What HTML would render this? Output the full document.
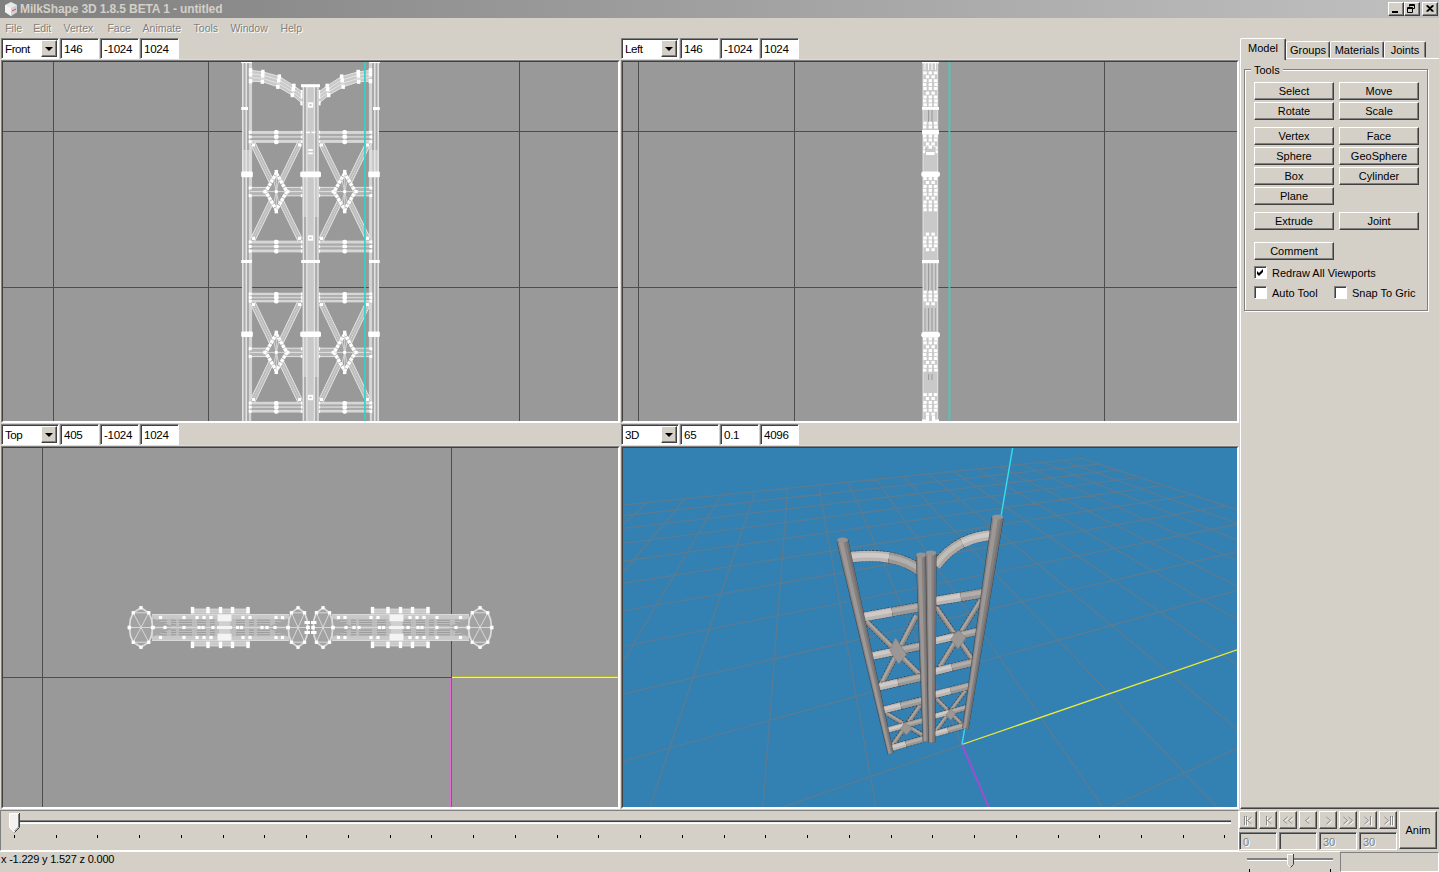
<!DOCTYPE html><html><head><meta charset="utf-8"><title>MilkShape 3D</title><style>
*{box-sizing:border-box;margin:0;padding:0}
html,body{width:1439px;height:872px;overflow:hidden;background:#d4d0c8;font-family:"Liberation Sans",sans-serif;font-size:11px;color:#000}
.abs{position:absolute}
#title{left:0;top:0;width:1439px;height:18px;background:linear-gradient(90deg,#808080 0%,#c0c0c0 100%)}
#title .t{left:20px;top:2px;font-weight:bold;font-size:12px;color:#d4d0c8;line-height:15px;white-space:nowrap;letter-spacing:-.12px}
.cb{top:2px;width:16px;height:14px;background:#d4d0c8;border:1px solid;border-color:#fff #404040 #404040 #fff;box-shadow:inset -1px -1px 0 #808080}
.menu span{position:absolute;top:21px;line-height:14px;font-size:10.5px;color:#808080;text-shadow:1px 1px 0 #fff;white-space:nowrap}
.sunk{border:1px solid;border-color:#808080 #fff #fff #808080;box-shadow:inset 1px 1px 0 #404040;background:#fff}
.edit{height:21px;font-size:11.6px;letter-spacing:-.3px;line-height:15px;padding:2.4px 0 0 3px;white-space:nowrap;overflow:hidden}
.combo{height:21px;width:58px}
.combo .tx{position:absolute;left:3px;top:2.6px;line-height:14px;font-size:11.6px;letter-spacing:-.45px}
.combo .dd{position:absolute;right:1px;top:1px;width:16px;height:17px;background:#d4d0c8;border:1px solid;border-color:#fff #404040 #404040 #fff;box-shadow:inset -1px -1px 0 #808080}
.combo .dd:after{content:"";position:absolute;left:3px;top:6px;border:4px solid transparent;border-top:4px solid #000;border-bottom:none}
.vp{border:1px solid;border-color:#808080 #fff #fff #808080;box-shadow:-1px -1px 0 #dedad2;overflow:hidden}
.vp:after{content:'';position:absolute;left:0;top:0;right:0;bottom:0;border:1px solid;border-color:#404040 #fff #fff #404040;pointer-events:none}
.vp svg{position:absolute;left:1px;top:1px;display:block;filter:blur(.3px)}
.btn{height:18px;width:80px;background:#d4d0c8;border:1px solid;border-color:#fff #404040 #404040 #fff;box-shadow:inset -1px -1px 0 #808080;text-align:center;font-size:11px;line-height:14px;padding-top:1px;white-space:nowrap}
.tab{background:#d4d0c8;border:1px solid;border-color:#fff #404040 transparent #fff;border-radius:2px 2px 0 0;box-shadow:inset -1px 0 0 #808080;text-align:center;font-size:11px;white-space:nowrap}
.chk{width:13px;height:13px;background:#fff;border:1px solid;border-color:#808080 #fff #fff #808080;box-shadow:inset 1px 1px 0 #404040}
.lbl{font-size:11px;line-height:13px;white-space:nowrap}
.abtn{width:18px;height:18px;background:#d4d0c8;border:1px solid;border-color:#fff #404040 #404040 #fff;box-shadow:inset -1px -1px 0 #808080}
.dis{color:#808080;text-shadow:1px 1px 0 #fff}
.dedit{width:38px;height:18px;border:1px solid;border-color:#808080 #fff #fff #808080;box-shadow:inset 1px 1px 0 #404040;background:#d4d0c8;font-size:11px;line-height:14px;padding:2px 0 0 3px}
</style></head><body>
<div id="title" class="abs"><svg class="abs" style="left:3px;top:1px" width="16" height="16" viewBox="0 0 16 16"><path d="M2 4 L8 1 L14 4 L14 11 L8 15 L2 11Z" fill="#e8e8e8"/><path d="M2 4 L8 7 L8 15 L2 11Z" fill="#f4f4f4"/><path d="M8 7 L14 4 L14 11 L8 15Z" fill="#d0d0d0"/><path d="M9 10 L13 8" stroke="#d04070" stroke-width="1"/></svg><div class="abs t">MilkShape 3D 1.8.5 BETA 1 - untitled</div>
<div class="abs cb" style="left:1388px"><div class="abs" style="left:3px;top:8px;width:6px;height:2px;background:#000"></div></div>
<div class="abs cb" style="left:1404px"><svg class="abs" style="left:0;top:0" width="14" height="12" viewBox="0 0 14 12"><path d="M4.5 3.5V1.5h5v4h-2M4.5 2.5h5 M2.5 4.5h5v5h-5z M2.5 5.5h5" stroke="#000" fill="none" stroke-width="1"/></svg></div>
<div class="abs cb" style="left:1422px"><svg class="abs" style="left:0;top:0" width="14" height="12" viewBox="0 0 14 12"><path d="M3.5 2.5l6 6M4.5 2.5l6 6 M9.5 2.5l-6 6M10.5 2.5l-6 6" stroke="#000" fill="none" stroke-width="1.1"/></svg></div>
</div>
<div class="menu"><span style="left:5.2px">File</span><span style="left:33.2px">Edit</span><span style="left:63.6px">Vertex</span><span style="left:107.4px">Face</span><span style="left:142.6px">Animate</span><span style="left:193.6px">Tools</span><span style="left:230.4px">Window</span><span style="left:280.4px">Help</span></div>
<div class="abs sunk combo" style="left:1px;top:38px"><span class="tx">Front</span><span class="dd"></span></div><div class="abs sunk edit" style="left:60px;top:38px;width:39px">146</div><div class="abs sunk edit" style="left:100px;top:38px;width:39px">-1024</div><div class="abs sunk edit" style="left:140px;top:38px;width:39px">1024</div>
<div class="abs sunk combo" style="left:621px;top:38px"><span class="tx">Left</span><span class="dd"></span></div><div class="abs sunk edit" style="left:680px;top:38px;width:39px">146</div><div class="abs sunk edit" style="left:720px;top:38px;width:39px">-1024</div><div class="abs sunk edit" style="left:760px;top:38px;width:39px">1024</div>
<div class="abs sunk combo" style="left:1px;top:424px"><span class="tx">Top</span><span class="dd"></span></div><div class="abs sunk edit" style="left:60px;top:424px;width:39px">405</div><div class="abs sunk edit" style="left:100px;top:424px;width:39px">-1024</div><div class="abs sunk edit" style="left:140px;top:424px;width:39px">1024</div>
<div class="abs sunk combo" style="left:621px;top:424px"><span class="tx">3D</span><span class="dd"></span></div><div class="abs sunk edit" style="left:680px;top:424px;width:39px">65</div><div class="abs sunk edit" style="left:720px;top:424px;width:39px">0.1</div><div class="abs sunk edit" style="left:760px;top:424px;width:39px">4096</div>
<div class="abs vp" style="left:1px;top:60px;width:619px;height:363px;background:#999"><svg width="615" height="359" viewBox="3 62 615 359" fill="none"><path d="M53.5 61V421M208.5 61V421M519.5 61V421M2 131.5H618M2 287.5H618" stroke="#4d4d4d" stroke-width="1"/><rect x="242" y="62" width="9.8" height="360" fill="#a9a9a9"/><rect x="242" y="150" width="9.5" height="22" fill="#c9c9c9"/><path d="M242.8 62V421M246.2 62V421M250 62V421" stroke="#e4e4e4" stroke-width="1.5"/><path d="M251.6 62V131M251.6 143V240M251.6 252V293M251.6 302V402" stroke="#e4e4e4" stroke-width=".8"/><rect x="241" y="61.5" width="10.8" height="1.6" fill="#fff"/><rect x="241.2" y="107" width="6.8" height="3" fill="#fff"/><rect x="241.2" y="260" width="10.8" height="3" fill="#fff"/><rect x="241.2" y="171.6" width="11.6" height="5.6" rx="1" fill="#fff"/><rect x="241.2" y="331.4" width="11.6" height="5.6" rx="1" fill="#fff"/><polygon points="250.5 70.3 262.9 71.9 279.4 76.5 293.8 85.8 302.6 92 302.1 103.3 292.3 95.1 277.8 86.8 262.3 81.7 250.5 81.2" fill="#c9c9c9"/><path d="M250.5 70.3L262.9 71.9L279.4 76.5L293.8 85.8L302.6 92" stroke="#e4e4e4" stroke-width="1"/><path d="M250.5 73.9L262.7 75.1L278.9 79.9L293.3 88.9L302.4 95.7" stroke="#e4e4e4" stroke-width="1"/><path d="M250.5 77.5L262.5 78.4L278.3 83.3L292.8 91.9L302.3 99.5" stroke="#e4e4e4" stroke-width="1"/><path d="M250.5 81.2L262.3 81.7L277.8 86.8L292.3 95.1L302.1 103.3" stroke="#e4e4e4" stroke-width="1"/><rect x="248.8" y="68.2" width="3.5" height="4.2" fill="#fff"/><rect x="248.8" y="72.3" width="3.5" height="4.2" fill="#fff"/><rect x="248.8" y="79.1" width="3.5" height="4.2" fill="#fff"/><rect x="261.1" y="69.8" width="3.5" height="4.2" fill="#fff"/><rect x="260.9" y="73.5" width="3.5" height="4.2" fill="#fff"/><rect x="260.6" y="79.6" width="3.5" height="4.2" fill="#fff"/><rect x="277.6" y="74.4" width="3.5" height="4.2" fill="#fff"/><rect x="277" y="78.3" width="3.5" height="4.2" fill="#fff"/><rect x="276.1" y="84.7" width="3.5" height="4.2" fill="#fff"/><rect x="292.1" y="83.7" width="3.5" height="4.2" fill="#fff"/><rect x="291.5" y="87.2" width="3.5" height="4.2" fill="#fff"/><rect x="290.6" y="93" width="3.5" height="4.2" fill="#fff"/><rect x="300.9" y="89.9" width="3.5" height="4.2" fill="#fff"/><rect x="300.7" y="94.2" width="3.5" height="4.2" fill="#fff"/><rect x="300.4" y="101.2" width="3.5" height="4.2" fill="#fff"/><rect x="250" y="131" width="53" height="11.9" fill="#a9a9a9"/><rect x="250" y="131" width="53" height="2.9" fill="#d6d6d6"/><rect x="250" y="136.1" width="53" height="1.6" fill="#d2d2d2"/><rect x="250" y="140" width="53" height="2.9" fill="#d6d6d6"/><rect x="274" y="130.1" width="4.6" height="4.4" rx="1.6" fill="#fff"/><rect x="274" y="135.1" width="4.6" height="3.6" rx="1" fill="#fff"/><rect x="274" y="139.6" width="4.6" height="4.6" rx="2" fill="#fff"/><rect x="248.7" y="130.7" width="3" height="3" fill="#fff"/><rect x="248.7" y="135.4" width="3" height="3" fill="#fff"/><rect x="248.7" y="140.2" width="3" height="3" fill="#fff"/><rect x="300.9" y="130.7" width="3" height="3" fill="#fff"/><rect x="300.9" y="135.4" width="3" height="3" fill="#fff"/><rect x="300.9" y="140.2" width="3" height="3" fill="#fff"/><rect x="250" y="240.7" width="53" height="11.6" fill="#a9a9a9"/><rect x="250" y="240.7" width="53" height="2.8" fill="#d6d6d6"/><rect x="250" y="245.7" width="53" height="1.6" fill="#d2d2d2"/><rect x="250" y="249.5" width="53" height="2.8" fill="#d6d6d6"/><rect x="274" y="239.8" width="4.6" height="4.4" rx="1.6" fill="#fff"/><rect x="274" y="244.7" width="4.6" height="3.6" rx="1" fill="#fff"/><rect x="274" y="249" width="4.6" height="4.6" rx="2" fill="#fff"/><rect x="248.7" y="240.4" width="3" height="3" fill="#fff"/><rect x="248.7" y="245" width="3" height="3" fill="#fff"/><rect x="248.7" y="249.6" width="3" height="3" fill="#fff"/><rect x="300.9" y="240.4" width="3" height="3" fill="#fff"/><rect x="300.9" y="245" width="3" height="3" fill="#fff"/><rect x="300.9" y="249.6" width="3" height="3" fill="#fff"/><rect x="250" y="292.8" width="53" height="9.5" fill="#a9a9a9"/><rect x="250" y="292.8" width="53" height="2.3" fill="#d6d6d6"/><rect x="250" y="296.8" width="53" height="1.6" fill="#d2d2d2"/><rect x="250" y="300" width="53" height="2.3" fill="#d6d6d6"/><rect x="274" y="291.9" width="4.6" height="4.4" rx="1.6" fill="#fff"/><rect x="274" y="295.8" width="4.6" height="3.6" rx="1" fill="#fff"/><rect x="274" y="299" width="4.6" height="4.6" rx="2" fill="#fff"/><rect x="248.7" y="292.5" width="3" height="3" fill="#fff"/><rect x="248.7" y="296.1" width="3" height="3" fill="#fff"/><rect x="248.7" y="299.6" width="3" height="3" fill="#fff"/><rect x="300.9" y="292.5" width="3" height="3" fill="#fff"/><rect x="300.9" y="296.1" width="3" height="3" fill="#fff"/><rect x="300.9" y="299.6" width="3" height="3" fill="#fff"/><rect x="250" y="401.8" width="53" height="10.7" fill="#a9a9a9"/><rect x="250" y="401.8" width="53" height="2.6" fill="#d6d6d6"/><rect x="250" y="406.3" width="53" height="1.6" fill="#d2d2d2"/><rect x="250" y="409.9" width="53" height="2.6" fill="#d6d6d6"/><rect x="274" y="400.9" width="4.6" height="4.4" rx="1.6" fill="#fff"/><rect x="274" y="405.3" width="4.6" height="3.6" rx="1" fill="#fff"/><rect x="274" y="409.2" width="4.6" height="4.6" rx="2" fill="#fff"/><rect x="248.7" y="401.5" width="3" height="3" fill="#fff"/><rect x="248.7" y="405.6" width="3" height="3" fill="#fff"/><rect x="248.7" y="409.8" width="3" height="3" fill="#fff"/><rect x="300.9" y="401.5" width="3" height="3" fill="#fff"/><rect x="300.9" y="405.6" width="3" height="3" fill="#fff"/><rect x="300.9" y="409.8" width="3" height="3" fill="#fff"/><rect x="250" y="187.2" width="53" height="8.8" fill="#b4b4b4"/><path d="M250 187.4H303M250 191.6H303M250 195.8H303" stroke="#e4e4e4" stroke-width="1"/><rect x="248.7" y="186.5" width="3" height="3" fill="#fff"/><rect x="248.7" y="194.1" width="3" height="3" fill="#fff"/><rect x="300.9" y="186.5" width="3" height="3" fill="#fff"/><rect x="300.9" y="194.1" width="3" height="3" fill="#fff"/><rect x="250" y="348" width="53" height="8.8" fill="#b4b4b4"/><path d="M250 348.2H303M250 352.4H303M250 356.6H303" stroke="#e4e4e4" stroke-width="1"/><rect x="248.7" y="347.3" width="3" height="3" fill="#fff"/><rect x="248.7" y="354.9" width="3" height="3" fill="#fff"/><rect x="300.9" y="347.3" width="3" height="3" fill="#fff"/><rect x="300.9" y="354.9" width="3" height="3" fill="#fff"/><path d="M252.6 143L300.3 240.4" stroke="#bcbcbc" stroke-width="5"/><path d="M250.4 144.1L298.1 241.5M254.8 141.9L302.5 239.3" stroke="#e4e4e4" stroke-width="1"/><path d="M252.6 143L300.3 240.4" stroke="#e0e0e0" stroke-width="1" stroke-dasharray="1.2 1.2"/><path d="M299.9 143L252.4 240.4" stroke="#bcbcbc" stroke-width="5"/><path d="M297.7 141.9L250.2 239.3M302.1 144.1L254.6 241.5" stroke="#e4e4e4" stroke-width="1"/><path d="M299.9 143L252.4 240.4" stroke="#e0e0e0" stroke-width="1" stroke-dasharray="1.2 1.2"/><rect x="252" y="143.5" width="3" height="3" fill="#fff"/><rect x="252" y="236.9" width="3" height="3" fill="#fff"/><rect x="298" y="143.5" width="3" height="3" fill="#fff"/><rect x="298" y="236.9" width="3" height="3" fill="#fff"/><path d="M252.6 302.6L300.3 401.5" stroke="#bcbcbc" stroke-width="5"/><path d="M250.3 303.7L298 402.6M254.9 301.5L302.6 400.4" stroke="#e4e4e4" stroke-width="1"/><path d="M252.6 302.6L300.3 401.5" stroke="#e0e0e0" stroke-width="1" stroke-dasharray="1.2 1.2"/><path d="M299.9 302.6L252.4 401.5" stroke="#bcbcbc" stroke-width="5"/><path d="M297.6 301.5L250.1 400.4M302.2 303.7L254.7 402.6" stroke="#e4e4e4" stroke-width="1"/><path d="M299.9 302.6L252.4 401.5" stroke="#e0e0e0" stroke-width="1" stroke-dasharray="1.2 1.2"/><rect x="252" y="303.1" width="3" height="3" fill="#fff"/><rect x="252" y="398" width="3" height="3" fill="#fff"/><rect x="298" y="303.1" width="3" height="3" fill="#fff"/><rect x="298" y="398" width="3" height="3" fill="#fff"/><path d="M276.3 173.4L286.9 191.6L276.3 209.8L265.7 191.6Z" fill="#a2a2a2" stroke="#fff" stroke-width="3.5" stroke-linejoin="round" stroke-dasharray="3.4 .7"/><path d="M276.3 173.4V209.8M265.7 191.6H286.9M273.3 178.4L279.3 204.8M279.3 178.4L273.3 204.8" stroke="#dcdcdc" stroke-width=".9"/><rect x="274.6" y="169.9" width="3.4" height="4" fill="#fff"/><rect x="274.6" y="209.3" width="3.4" height="4" fill="#fff"/><rect x="274.8" y="190.1" width="3" height="3" fill="#fff"/><rect x="263.2" y="190.1" width="3" height="3" fill="#fff"/><rect x="286.4" y="190.1" width="3" height="3" fill="#fff"/><path d="M276.3 334.2L286.9 352.4L276.3 370.6L265.7 352.4Z" fill="#a2a2a2" stroke="#fff" stroke-width="3.5" stroke-linejoin="round" stroke-dasharray="3.4 .7"/><path d="M276.3 334.2V370.6M265.7 352.4H286.9M273.3 339.2L279.3 365.6M279.3 339.2L273.3 365.6" stroke="#dcdcdc" stroke-width=".9"/><rect x="274.6" y="330.7" width="3.4" height="4" fill="#fff"/><rect x="274.6" y="370.1" width="3.4" height="4" fill="#fff"/><rect x="274.8" y="350.9" width="3" height="3" fill="#fff"/><rect x="263.2" y="350.9" width="3" height="3" fill="#fff"/><rect x="286.4" y="350.9" width="3" height="3" fill="#fff"/><g transform="translate(621,0) scale(-1,1)"><rect x="242" y="62" width="9.8" height="360" fill="#a9a9a9"/><rect x="242" y="150" width="9.5" height="22" fill="#c9c9c9"/><path d="M242.8 62V421M246.2 62V421M250 62V421" stroke="#e4e4e4" stroke-width="1.5"/><path d="M251.6 62V131M251.6 143V240M251.6 252V293M251.6 302V402" stroke="#e4e4e4" stroke-width=".8"/><rect x="241" y="61.5" width="10.8" height="1.6" fill="#fff"/><rect x="241.2" y="107" width="6.8" height="3" fill="#fff"/><rect x="241.2" y="260" width="10.8" height="3" fill="#fff"/><rect x="241.2" y="171.6" width="11.6" height="5.6" rx="1" fill="#fff"/><rect x="241.2" y="331.4" width="11.6" height="5.6" rx="1" fill="#fff"/><polygon points="250.5 70.3 262.9 71.9 279.4 76.5 293.8 85.8 302.6 92 302.1 103.3 292.3 95.1 277.8 86.8 262.3 81.7 250.5 81.2" fill="#c9c9c9"/><path d="M250.5 70.3L262.9 71.9L279.4 76.5L293.8 85.8L302.6 92" stroke="#e4e4e4" stroke-width="1"/><path d="M250.5 73.9L262.7 75.1L278.9 79.9L293.3 88.9L302.4 95.7" stroke="#e4e4e4" stroke-width="1"/><path d="M250.5 77.5L262.5 78.4L278.3 83.3L292.8 91.9L302.3 99.5" stroke="#e4e4e4" stroke-width="1"/><path d="M250.5 81.2L262.3 81.7L277.8 86.8L292.3 95.1L302.1 103.3" stroke="#e4e4e4" stroke-width="1"/><rect x="248.8" y="68.2" width="3.5" height="4.2" fill="#fff"/><rect x="248.8" y="72.3" width="3.5" height="4.2" fill="#fff"/><rect x="248.8" y="79.1" width="3.5" height="4.2" fill="#fff"/><rect x="261.1" y="69.8" width="3.5" height="4.2" fill="#fff"/><rect x="260.9" y="73.5" width="3.5" height="4.2" fill="#fff"/><rect x="260.6" y="79.6" width="3.5" height="4.2" fill="#fff"/><rect x="277.6" y="74.4" width="3.5" height="4.2" fill="#fff"/><rect x="277" y="78.3" width="3.5" height="4.2" fill="#fff"/><rect x="276.1" y="84.7" width="3.5" height="4.2" fill="#fff"/><rect x="292.1" y="83.7" width="3.5" height="4.2" fill="#fff"/><rect x="291.5" y="87.2" width="3.5" height="4.2" fill="#fff"/><rect x="290.6" y="93" width="3.5" height="4.2" fill="#fff"/><rect x="300.9" y="89.9" width="3.5" height="4.2" fill="#fff"/><rect x="300.7" y="94.2" width="3.5" height="4.2" fill="#fff"/><rect x="300.4" y="101.2" width="3.5" height="4.2" fill="#fff"/><rect x="250" y="131" width="53" height="11.9" fill="#a9a9a9"/><rect x="250" y="131" width="53" height="2.9" fill="#d6d6d6"/><rect x="250" y="136.1" width="53" height="1.6" fill="#d2d2d2"/><rect x="250" y="140" width="53" height="2.9" fill="#d6d6d6"/><rect x="274" y="130.1" width="4.6" height="4.4" rx="1.6" fill="#fff"/><rect x="274" y="135.1" width="4.6" height="3.6" rx="1" fill="#fff"/><rect x="274" y="139.6" width="4.6" height="4.6" rx="2" fill="#fff"/><rect x="248.7" y="130.7" width="3" height="3" fill="#fff"/><rect x="248.7" y="135.4" width="3" height="3" fill="#fff"/><rect x="248.7" y="140.2" width="3" height="3" fill="#fff"/><rect x="300.9" y="130.7" width="3" height="3" fill="#fff"/><rect x="300.9" y="135.4" width="3" height="3" fill="#fff"/><rect x="300.9" y="140.2" width="3" height="3" fill="#fff"/><rect x="250" y="240.7" width="53" height="11.6" fill="#a9a9a9"/><rect x="250" y="240.7" width="53" height="2.8" fill="#d6d6d6"/><rect x="250" y="245.7" width="53" height="1.6" fill="#d2d2d2"/><rect x="250" y="249.5" width="53" height="2.8" fill="#d6d6d6"/><rect x="274" y="239.8" width="4.6" height="4.4" rx="1.6" fill="#fff"/><rect x="274" y="244.7" width="4.6" height="3.6" rx="1" fill="#fff"/><rect x="274" y="249" width="4.6" height="4.6" rx="2" fill="#fff"/><rect x="248.7" y="240.4" width="3" height="3" fill="#fff"/><rect x="248.7" y="245" width="3" height="3" fill="#fff"/><rect x="248.7" y="249.6" width="3" height="3" fill="#fff"/><rect x="300.9" y="240.4" width="3" height="3" fill="#fff"/><rect x="300.9" y="245" width="3" height="3" fill="#fff"/><rect x="300.9" y="249.6" width="3" height="3" fill="#fff"/><rect x="250" y="292.8" width="53" height="9.5" fill="#a9a9a9"/><rect x="250" y="292.8" width="53" height="2.3" fill="#d6d6d6"/><rect x="250" y="296.8" width="53" height="1.6" fill="#d2d2d2"/><rect x="250" y="300" width="53" height="2.3" fill="#d6d6d6"/><rect x="274" y="291.9" width="4.6" height="4.4" rx="1.6" fill="#fff"/><rect x="274" y="295.8" width="4.6" height="3.6" rx="1" fill="#fff"/><rect x="274" y="299" width="4.6" height="4.6" rx="2" fill="#fff"/><rect x="248.7" y="292.5" width="3" height="3" fill="#fff"/><rect x="248.7" y="296.1" width="3" height="3" fill="#fff"/><rect x="248.7" y="299.6" width="3" height="3" fill="#fff"/><rect x="300.9" y="292.5" width="3" height="3" fill="#fff"/><rect x="300.9" y="296.1" width="3" height="3" fill="#fff"/><rect x="300.9" y="299.6" width="3" height="3" fill="#fff"/><rect x="250" y="401.8" width="53" height="10.7" fill="#a9a9a9"/><rect x="250" y="401.8" width="53" height="2.6" fill="#d6d6d6"/><rect x="250" y="406.3" width="53" height="1.6" fill="#d2d2d2"/><rect x="250" y="409.9" width="53" height="2.6" fill="#d6d6d6"/><rect x="274" y="400.9" width="4.6" height="4.4" rx="1.6" fill="#fff"/><rect x="274" y="405.3" width="4.6" height="3.6" rx="1" fill="#fff"/><rect x="274" y="409.2" width="4.6" height="4.6" rx="2" fill="#fff"/><rect x="248.7" y="401.5" width="3" height="3" fill="#fff"/><rect x="248.7" y="405.6" width="3" height="3" fill="#fff"/><rect x="248.7" y="409.8" width="3" height="3" fill="#fff"/><rect x="300.9" y="401.5" width="3" height="3" fill="#fff"/><rect x="300.9" y="405.6" width="3" height="3" fill="#fff"/><rect x="300.9" y="409.8" width="3" height="3" fill="#fff"/><rect x="250" y="187.2" width="53" height="8.8" fill="#b4b4b4"/><path d="M250 187.4H303M250 191.6H303M250 195.8H303" stroke="#e4e4e4" stroke-width="1"/><rect x="248.7" y="186.5" width="3" height="3" fill="#fff"/><rect x="248.7" y="194.1" width="3" height="3" fill="#fff"/><rect x="300.9" y="186.5" width="3" height="3" fill="#fff"/><rect x="300.9" y="194.1" width="3" height="3" fill="#fff"/><rect x="250" y="348" width="53" height="8.8" fill="#b4b4b4"/><path d="M250 348.2H303M250 352.4H303M250 356.6H303" stroke="#e4e4e4" stroke-width="1"/><rect x="248.7" y="347.3" width="3" height="3" fill="#fff"/><rect x="248.7" y="354.9" width="3" height="3" fill="#fff"/><rect x="300.9" y="347.3" width="3" height="3" fill="#fff"/><rect x="300.9" y="354.9" width="3" height="3" fill="#fff"/><path d="M252.6 143L300.3 240.4" stroke="#bcbcbc" stroke-width="5"/><path d="M250.4 144.1L298.1 241.5M254.8 141.9L302.5 239.3" stroke="#e4e4e4" stroke-width="1"/><path d="M252.6 143L300.3 240.4" stroke="#e0e0e0" stroke-width="1" stroke-dasharray="1.2 1.2"/><path d="M299.9 143L252.4 240.4" stroke="#bcbcbc" stroke-width="5"/><path d="M297.7 141.9L250.2 239.3M302.1 144.1L254.6 241.5" stroke="#e4e4e4" stroke-width="1"/><path d="M299.9 143L252.4 240.4" stroke="#e0e0e0" stroke-width="1" stroke-dasharray="1.2 1.2"/><rect x="252" y="143.5" width="3" height="3" fill="#fff"/><rect x="252" y="236.9" width="3" height="3" fill="#fff"/><rect x="298" y="143.5" width="3" height="3" fill="#fff"/><rect x="298" y="236.9" width="3" height="3" fill="#fff"/><path d="M252.6 302.6L300.3 401.5" stroke="#bcbcbc" stroke-width="5"/><path d="M250.3 303.7L298 402.6M254.9 301.5L302.6 400.4" stroke="#e4e4e4" stroke-width="1"/><path d="M252.6 302.6L300.3 401.5" stroke="#e0e0e0" stroke-width="1" stroke-dasharray="1.2 1.2"/><path d="M299.9 302.6L252.4 401.5" stroke="#bcbcbc" stroke-width="5"/><path d="M297.6 301.5L250.1 400.4M302.2 303.7L254.7 402.6" stroke="#e4e4e4" stroke-width="1"/><path d="M299.9 302.6L252.4 401.5" stroke="#e0e0e0" stroke-width="1" stroke-dasharray="1.2 1.2"/><rect x="252" y="303.1" width="3" height="3" fill="#fff"/><rect x="252" y="398" width="3" height="3" fill="#fff"/><rect x="298" y="303.1" width="3" height="3" fill="#fff"/><rect x="298" y="398" width="3" height="3" fill="#fff"/><path d="M276.3 173.4L286.9 191.6L276.3 209.8L265.7 191.6Z" fill="#a2a2a2" stroke="#fff" stroke-width="3.5" stroke-linejoin="round" stroke-dasharray="3.4 .7"/><path d="M276.3 173.4V209.8M265.7 191.6H286.9M273.3 178.4L279.3 204.8M279.3 178.4L273.3 204.8" stroke="#dcdcdc" stroke-width=".9"/><rect x="274.6" y="169.9" width="3.4" height="4" fill="#fff"/><rect x="274.6" y="209.3" width="3.4" height="4" fill="#fff"/><rect x="274.8" y="190.1" width="3" height="3" fill="#fff"/><rect x="263.2" y="190.1" width="3" height="3" fill="#fff"/><rect x="286.4" y="190.1" width="3" height="3" fill="#fff"/><path d="M276.3 334.2L286.9 352.4L276.3 370.6L265.7 352.4Z" fill="#a2a2a2" stroke="#fff" stroke-width="3.5" stroke-linejoin="round" stroke-dasharray="3.4 .7"/><path d="M276.3 334.2V370.6M265.7 352.4H286.9M273.3 339.2L279.3 365.6M279.3 339.2L273.3 365.6" stroke="#dcdcdc" stroke-width=".9"/><rect x="274.6" y="330.7" width="3.4" height="4" fill="#fff"/><rect x="274.6" y="370.1" width="3.4" height="4" fill="#fff"/><rect x="274.8" y="350.9" width="3" height="3" fill="#fff"/><rect x="263.2" y="350.9" width="3" height="3" fill="#fff"/><rect x="286.4" y="350.9" width="3" height="3" fill="#fff"/></g><rect x="302.6" y="86" width="16.2" height="336" fill="#adadad"/><rect x="307" y="87" width="7.4" height="335" fill="#c9c9c9"/><rect x="302.6" y="177" width="16.2" height="40" fill="#c9c9c9"/><rect x="302.6" y="337" width="16.2" height="40" fill="#c9c9c9"/><path d="M303.3 86V421M306.8 86V421M314.4 86V421M318 86V421" stroke="#e4e4e4" stroke-width="1.3"/><rect x="301" y="84.2" width="19" height="3" fill="#fff"/><rect x="300.2" y="171.6" width="20.8" height="5.6" rx="1.5" fill="#fff"/><rect x="300.2" y="331.4" width="20.8" height="5.6" rx="1.5" fill="#fff"/><rect x="301.2" y="260" width="18.8" height="3" fill="#fff"/><rect x="307.8" y="102.3" width="5.4" height="5.4" fill="#fff"/><rect x="309.5" y="104.3" width="2" height="1.4" fill="#b0b0b0"/><rect x="307.8" y="235.3" width="5.4" height="5.4" fill="#fff"/><rect x="309.5" y="237.3" width="2" height="1.4" fill="#b0b0b0"/><rect x="307.8" y="394.8" width="5.4" height="5.4" fill="#fff"/><rect x="309.5" y="396.8" width="2" height="1.4" fill="#b0b0b0"/><rect x="308.2" y="149.1" width="4.6" height="1.8" fill="#fff"/><rect x="308.2" y="152.5" width="4.6" height="1.8" fill="#fff"/><rect x="306" y="131.6" width="4" height="1.6" fill="#fff"/><rect x="311.4" y="131.6" width="4" height="1.6" fill="#fff"/><path d="M364.9 61V421" stroke="#3ccfc6" stroke-width="1.7"/></svg></div>
<div class="abs vp" style="left:621px;top:60px;width:618px;height:363px;background:#999"><svg width="614" height="359" viewBox="623 62 614 359" fill="none"><path d="M638.5 61V421M794.5 61V421M1104.5 61V421M622 131.5H1238M622 287.5H1238" stroke="#4d4d4d" stroke-width="1"/><rect x="922.6" y="62" width="15.6" height="360" fill="#c9c9c9"/><path d="M923.2 62V421M937.6 62V421" stroke="#dedede" stroke-width="1"/><path d="M928.6 110V122M932 110V122" stroke="#8a8a8a" stroke-width=".8"/><path d="M928.6 263V291M932 263V291" stroke="#8a8a8a" stroke-width=".8"/><path d="M928.6 308V331M932 308V331" stroke="#8a8a8a" stroke-width=".8"/><path d="M928.6 374V380M932 374V380" stroke="#8a8a8a" stroke-width=".8"/><path d="M925 263V291M935.6 263V291" stroke="#9a9a9a" stroke-width=".8"/><path d="M925 308V331M935.6 308V331" stroke="#9a9a9a" stroke-width=".8"/><rect x="922" y="61.5" width="17" height="1.8" fill="#fff"/><path d="M925 63V70M928.6 63V70M932 63V70M935.6 63V70" stroke="#fff" stroke-width="1"/><rect x="923.4" y="71.4" width="3.4" height="3" fill="#fff"/><rect x="928.6" y="71.4" width="3.4" height="3" fill="#fff"/><rect x="933.8" y="71.4" width="3.4" height="3" fill="#fff"/><rect x="925.8" y="75.3" width="3.4" height="3" fill="#fff"/><rect x="931.4" y="75.3" width="3.4" height="3" fill="#fff"/><rect x="923.4" y="79.2" width="3.4" height="3" fill="#fff"/><rect x="928.6" y="79.2" width="3.4" height="3" fill="#fff"/><rect x="933.8" y="79.2" width="3.4" height="3" fill="#fff"/><rect x="923" y="83.1" width="3.4" height="3" fill="#fff"/><rect x="934.2" y="83.1" width="3.4" height="3" fill="#fff"/><rect x="928.6" y="83.1" width="3.4" height="3" fill="#fff"/><rect x="923.4" y="87" width="3.4" height="3" fill="#fff"/><rect x="928.6" y="87" width="3.4" height="3" fill="#fff"/><rect x="933.8" y="87" width="3.4" height="3" fill="#fff"/><rect x="925.8" y="91.6" width="3.4" height="3" fill="#fff"/><rect x="931.4" y="91.6" width="3.4" height="3" fill="#fff"/><rect x="923.4" y="95.5" width="3.4" height="3" fill="#fff"/><rect x="928.6" y="95.5" width="3.4" height="3" fill="#fff"/><rect x="933.8" y="95.5" width="3.4" height="3" fill="#fff"/><rect x="923" y="99.4" width="3.4" height="3" fill="#fff"/><rect x="934.2" y="99.4" width="3.4" height="3" fill="#fff"/><rect x="928.6" y="99.4" width="3.4" height="3" fill="#fff"/><rect x="923.4" y="103.3" width="3.4" height="3" fill="#fff"/><rect x="928.6" y="103.3" width="3.4" height="3" fill="#fff"/><rect x="933.8" y="103.3" width="3.4" height="3" fill="#fff"/><rect x="923.4" y="121.6" width="3.4" height="3" fill="#fff"/><rect x="928.6" y="121.6" width="3.4" height="3" fill="#fff"/><rect x="933.8" y="121.6" width="3.4" height="3" fill="#fff"/><rect x="923" y="125.5" width="3.4" height="3" fill="#fff"/><rect x="934.2" y="125.5" width="3.4" height="3" fill="#fff"/><rect x="928.6" y="125.5" width="3.4" height="3" fill="#fff"/><rect x="923" y="134.6" width="3.4" height="3" fill="#fff"/><rect x="934.2" y="134.6" width="3.4" height="3" fill="#fff"/><rect x="928.6" y="134.6" width="3.4" height="3" fill="#fff"/><rect x="923.4" y="138.5" width="3.4" height="3" fill="#fff"/><rect x="928.6" y="138.5" width="3.4" height="3" fill="#fff"/><rect x="933.8" y="138.5" width="3.4" height="3" fill="#fff"/><rect x="925.8" y="142.4" width="3.4" height="3" fill="#fff"/><rect x="931.4" y="142.4" width="3.4" height="3" fill="#fff"/><rect x="923.4" y="146.3" width="3.4" height="3" fill="#fff"/><rect x="928.6" y="146.3" width="3.4" height="3" fill="#fff"/><rect x="933.8" y="146.3" width="3.4" height="3" fill="#fff"/><rect x="923" y="150.2" width="3.4" height="3" fill="#fff"/><rect x="934.2" y="150.2" width="3.4" height="3" fill="#fff"/><rect x="928.6" y="150.2" width="3.4" height="3" fill="#fff"/><rect x="923.4" y="177.1" width="3.4" height="3" fill="#fff"/><rect x="928.6" y="177.1" width="3.4" height="3" fill="#fff"/><rect x="933.8" y="177.1" width="3.4" height="3" fill="#fff"/><rect x="925.8" y="181" width="3.4" height="3" fill="#fff"/><rect x="931.4" y="181" width="3.4" height="3" fill="#fff"/><rect x="923.4" y="184.9" width="3.4" height="3" fill="#fff"/><rect x="928.6" y="184.9" width="3.4" height="3" fill="#fff"/><rect x="933.8" y="184.9" width="3.4" height="3" fill="#fff"/><rect x="923" y="188.8" width="3.4" height="3" fill="#fff"/><rect x="934.2" y="188.8" width="3.4" height="3" fill="#fff"/><rect x="928.6" y="188.8" width="3.4" height="3" fill="#fff"/><rect x="923.4" y="192.7" width="3.4" height="3" fill="#fff"/><rect x="928.6" y="192.7" width="3.4" height="3" fill="#fff"/><rect x="933.8" y="192.7" width="3.4" height="3" fill="#fff"/><rect x="925.8" y="196.6" width="3.4" height="3" fill="#fff"/><rect x="931.4" y="196.6" width="3.4" height="3" fill="#fff"/><rect x="923.4" y="200.5" width="3.4" height="3" fill="#fff"/><rect x="928.6" y="200.5" width="3.4" height="3" fill="#fff"/><rect x="933.8" y="200.5" width="3.4" height="3" fill="#fff"/><rect x="923" y="204.4" width="3.4" height="3" fill="#fff"/><rect x="934.2" y="204.4" width="3.4" height="3" fill="#fff"/><rect x="928.6" y="204.4" width="3.4" height="3" fill="#fff"/><rect x="923.4" y="208.3" width="3.4" height="3" fill="#fff"/><rect x="928.6" y="208.3" width="3.4" height="3" fill="#fff"/><rect x="933.8" y="208.3" width="3.4" height="3" fill="#fff"/><rect x="925.8" y="232.6" width="3.4" height="3" fill="#fff"/><rect x="931.4" y="232.6" width="3.4" height="3" fill="#fff"/><rect x="923.4" y="236.5" width="3.4" height="3" fill="#fff"/><rect x="928.6" y="236.5" width="3.4" height="3" fill="#fff"/><rect x="933.8" y="236.5" width="3.4" height="3" fill="#fff"/><rect x="923" y="240.4" width="3.4" height="3" fill="#fff"/><rect x="934.2" y="240.4" width="3.4" height="3" fill="#fff"/><rect x="928.6" y="240.4" width="3.4" height="3" fill="#fff"/><rect x="923.4" y="244.3" width="3.4" height="3" fill="#fff"/><rect x="928.6" y="244.3" width="3.4" height="3" fill="#fff"/><rect x="933.8" y="244.3" width="3.4" height="3" fill="#fff"/><rect x="925.8" y="248.2" width="3.4" height="3" fill="#fff"/><rect x="931.4" y="248.2" width="3.4" height="3" fill="#fff"/><rect x="923.4" y="290.6" width="3.4" height="3" fill="#fff"/><rect x="928.6" y="290.6" width="3.4" height="3" fill="#fff"/><rect x="933.8" y="290.6" width="3.4" height="3" fill="#fff"/><rect x="923" y="294.5" width="3.4" height="3" fill="#fff"/><rect x="934.2" y="294.5" width="3.4" height="3" fill="#fff"/><rect x="928.6" y="294.5" width="3.4" height="3" fill="#fff"/><rect x="923.4" y="298.4" width="3.4" height="3" fill="#fff"/><rect x="928.6" y="298.4" width="3.4" height="3" fill="#fff"/><rect x="933.8" y="298.4" width="3.4" height="3" fill="#fff"/><rect x="925.8" y="302.3" width="3.4" height="3" fill="#fff"/><rect x="931.4" y="302.3" width="3.4" height="3" fill="#fff"/><rect x="923" y="337.5" width="3.4" height="3" fill="#fff"/><rect x="934.2" y="337.5" width="3.4" height="3" fill="#fff"/><rect x="928.6" y="337.5" width="3.4" height="3" fill="#fff"/><rect x="923.4" y="341.4" width="3.4" height="3" fill="#fff"/><rect x="928.6" y="341.4" width="3.4" height="3" fill="#fff"/><rect x="933.8" y="341.4" width="3.4" height="3" fill="#fff"/><rect x="925.8" y="345.3" width="3.4" height="3" fill="#fff"/><rect x="931.4" y="345.3" width="3.4" height="3" fill="#fff"/><rect x="923.4" y="349.2" width="3.4" height="3" fill="#fff"/><rect x="928.6" y="349.2" width="3.4" height="3" fill="#fff"/><rect x="933.8" y="349.2" width="3.4" height="3" fill="#fff"/><rect x="923" y="353.1" width="3.4" height="3" fill="#fff"/><rect x="934.2" y="353.1" width="3.4" height="3" fill="#fff"/><rect x="928.6" y="353.1" width="3.4" height="3" fill="#fff"/><rect x="923.4" y="357" width="3.4" height="3" fill="#fff"/><rect x="928.6" y="357" width="3.4" height="3" fill="#fff"/><rect x="933.8" y="357" width="3.4" height="3" fill="#fff"/><rect x="925.8" y="360.9" width="3.4" height="3" fill="#fff"/><rect x="931.4" y="360.9" width="3.4" height="3" fill="#fff"/><rect x="923.4" y="364.8" width="3.4" height="3" fill="#fff"/><rect x="928.6" y="364.8" width="3.4" height="3" fill="#fff"/><rect x="933.8" y="364.8" width="3.4" height="3" fill="#fff"/><rect x="923" y="368.7" width="3.4" height="3" fill="#fff"/><rect x="934.2" y="368.7" width="3.4" height="3" fill="#fff"/><rect x="928.6" y="368.7" width="3.4" height="3" fill="#fff"/><rect x="923.4" y="393.1" width="3.4" height="3" fill="#fff"/><rect x="928.6" y="393.1" width="3.4" height="3" fill="#fff"/><rect x="933.8" y="393.1" width="3.4" height="3" fill="#fff"/><rect x="925.8" y="397" width="3.4" height="3" fill="#fff"/><rect x="931.4" y="397" width="3.4" height="3" fill="#fff"/><rect x="923.4" y="400.9" width="3.4" height="3" fill="#fff"/><rect x="928.6" y="400.9" width="3.4" height="3" fill="#fff"/><rect x="933.8" y="400.9" width="3.4" height="3" fill="#fff"/><rect x="923" y="404.8" width="3.4" height="3" fill="#fff"/><rect x="934.2" y="404.8" width="3.4" height="3" fill="#fff"/><rect x="928.6" y="404.8" width="3.4" height="3" fill="#fff"/><rect x="923.4" y="408.7" width="3.4" height="3" fill="#fff"/><rect x="928.6" y="408.7" width="3.4" height="3" fill="#fff"/><rect x="933.8" y="408.7" width="3.4" height="3" fill="#fff"/><rect x="925.8" y="412.6" width="3.4" height="3" fill="#fff"/><rect x="931.4" y="412.6" width="3.4" height="3" fill="#fff"/><rect x="922" y="107" width="17" height="2.8" rx="0" fill="#fff"/><rect x="922" y="130" width="17" height="4.5" rx="1" fill="#fff"/><rect x="921.2" y="171.5" width="18.799999999999955" height="5.6" rx="2.4" fill="#fff"/><rect x="922" y="260" width="17" height="3.2" rx="0" fill="#fff"/><rect x="921.2" y="332" width="18.799999999999955" height="5.6" rx="2.4" fill="#fff"/><rect x="925" y="147" width="10.6" height="8" fill="#c9c9c9"/><rect x="926" y="152" width="8.6" height="3" fill="#fff"/><rect x="928.6" y="145.3" width="3.4" height="3.4" fill="#fff"/><rect x="926" y="416" width="3" height="5" fill="#fff"/><rect x="932" y="416" width="3" height="5" fill="#fff"/><rect x="922" y="419.5" width="5" height="1.5" fill="#fff"/><rect x="934" y="419.5" width="5" height="1.5" fill="#fff"/><path d="M949.4 61V421" stroke="#3ccfc6" stroke-width="1.7"/></svg></div>
<div class="abs vp" style="left:1px;top:446px;width:619px;height:363px;background:#999"><svg width="615" height="359" viewBox="3 448 615 359" fill="none"><path d="M42.5 447V807M451.5 447V807M2 677.5H618" stroke="#4d4d4d" stroke-width="1"/><path d="M452 676.5H618" stroke="#b4b432"/><path d="M452 677.5H618" stroke="#f2f278"/><path d="M450.5 678V807" stroke="#e070d0"/><path d="M451.5 678V807" stroke="#b83aa8"/><rect x="152" y="614.3" width="137" height="26.4" fill="#c9c9c9"/><rect x="154" y="618.9" width="133" height="17.2" fill="#bdbdbd"/><path d="M158 620.3H283M158 622.5H283M158 624.9H283M158 630.1H283M158 632.5H283M158 634.7H283" stroke="#9c9c9c" stroke-width="1.1" stroke-dasharray="9 4 5 3 13 5"/><path d="M152 627.5H289" stroke="#d6d6d6" stroke-width="1.2"/><path d="M152 614.5H289M152 640.5H289" stroke="#d9d9d9" stroke-width="1"/><path d="M153 618.5L172 626.5L153 626.5ZM153 636.5L172 628.5L153 628.5Z" fill="#a6a6a6"/><path d="M288 618.5L269 626.5L288 626.5ZM288 636.5L269 628.5L288 628.5Z" fill="#a6a6a6"/><rect x="191" y="609.1" width="59" height="4" fill="#c9c9c9"/><path d="M191 609.1H250M191 613.1H250" stroke="#e0e0e0" stroke-width=".9"/><rect x="190.8" y="606.9" width="3.4" height="6.5" fill="#fff"/><rect x="206.3" y="606.9" width="3.4" height="6.5" fill="#fff"/><rect x="218.8" y="606.9" width="3.4" height="6.5" fill="#fff"/><rect x="230.8" y="606.9" width="3.4" height="6.5" fill="#fff"/><rect x="246.3" y="606.9" width="3.4" height="6.5" fill="#fff"/><rect x="191" y="641.9" width="59" height="4" fill="#c9c9c9"/><path d="M191 641.9H250M191 645.9H250" stroke="#e0e0e0" stroke-width=".9"/><rect x="190.8" y="641.6" width="3.4" height="6.5" fill="#fff"/><rect x="206.3" y="641.6" width="3.4" height="6.5" fill="#fff"/><rect x="218.8" y="641.6" width="3.4" height="6.5" fill="#fff"/><rect x="230.8" y="641.6" width="3.4" height="6.5" fill="#fff"/><rect x="246.3" y="641.6" width="3.4" height="6.5" fill="#fff"/><rect x="332" y="614.3" width="137" height="26.4" fill="#c9c9c9"/><rect x="334" y="618.9" width="133" height="17.2" fill="#bdbdbd"/><path d="M338 620.3H463M338 622.5H463M338 624.9H463M338 630.1H463M338 632.5H463M338 634.7H463" stroke="#9c9c9c" stroke-width="1.1" stroke-dasharray="9 4 5 3 13 5"/><path d="M332 627.5H469" stroke="#d6d6d6" stroke-width="1.2"/><path d="M332 614.5H469M332 640.5H469" stroke="#d9d9d9" stroke-width="1"/><path d="M333 618.5L352 626.5L333 626.5ZM333 636.5L352 628.5L333 628.5Z" fill="#a6a6a6"/><path d="M468 618.5L449 626.5L468 626.5ZM468 636.5L449 628.5L468 628.5Z" fill="#a6a6a6"/><rect x="371" y="609.1" width="58.5" height="4" fill="#c9c9c9"/><path d="M371 609.1H429.5M371 613.1H429.5" stroke="#e0e0e0" stroke-width=".9"/><rect x="370.8" y="606.9" width="3.4" height="6.5" fill="#fff"/><rect x="386.3" y="606.9" width="3.4" height="6.5" fill="#fff"/><rect x="398.8" y="606.9" width="3.4" height="6.5" fill="#fff"/><rect x="410.8" y="606.9" width="3.4" height="6.5" fill="#fff"/><rect x="426.3" y="606.9" width="3.4" height="6.5" fill="#fff"/><rect x="371" y="641.9" width="58.5" height="4" fill="#c9c9c9"/><path d="M371 641.9H429.5M371 645.9H429.5" stroke="#e0e0e0" stroke-width=".9"/><rect x="370.8" y="641.6" width="3.4" height="6.5" fill="#fff"/><rect x="386.3" y="641.6" width="3.4" height="6.5" fill="#fff"/><rect x="398.8" y="641.6" width="3.4" height="6.5" fill="#fff"/><rect x="410.8" y="641.6" width="3.4" height="6.5" fill="#fff"/><rect x="426.3" y="641.6" width="3.4" height="6.5" fill="#fff"/><rect x="158.9" y="615.9" width="3.2" height="3.2" fill="#fff"/><rect x="158.9" y="635.9" width="3.2" height="3.2" fill="#fff"/><rect x="182.4" y="615.9" width="3.2" height="3.2" fill="#fff"/><rect x="182.4" y="635.9" width="3.2" height="3.2" fill="#fff"/><rect x="195.4" y="615.9" width="3.2" height="3.2" fill="#fff"/><rect x="195.4" y="635.9" width="3.2" height="3.2" fill="#fff"/><rect x="202.4" y="615.9" width="3.2" height="3.2" fill="#fff"/><rect x="202.4" y="635.9" width="3.2" height="3.2" fill="#fff"/><rect x="209.4" y="615.9" width="3.2" height="3.2" fill="#fff"/><rect x="209.4" y="635.9" width="3.2" height="3.2" fill="#fff"/><rect x="241.4" y="615.9" width="3.2" height="3.2" fill="#fff"/><rect x="241.4" y="635.9" width="3.2" height="3.2" fill="#fff"/><rect x="248.4" y="615.9" width="3.2" height="3.2" fill="#fff"/><rect x="248.4" y="635.9" width="3.2" height="3.2" fill="#fff"/><rect x="274.4" y="615.9" width="3.2" height="3.2" fill="#fff"/><rect x="274.4" y="635.9" width="3.2" height="3.2" fill="#fff"/><rect x="280.9" y="615.9" width="3.2" height="3.2" fill="#fff"/><rect x="280.9" y="635.9" width="3.2" height="3.2" fill="#fff"/><rect x="163.4" y="625.9" width="3.2" height="3.2" fill="#fff"/><rect x="182.4" y="625.9" width="3.2" height="3.2" fill="#fff"/><rect x="197.4" y="625.9" width="3.2" height="3.2" fill="#fff"/><rect x="201.4" y="625.9" width="3.2" height="3.2" fill="#fff"/><rect x="211.4" y="625.9" width="3.2" height="3.2" fill="#fff"/><rect x="235.9" y="625.9" width="3.2" height="3.2" fill="#fff"/><rect x="239.9" y="625.9" width="3.2" height="3.2" fill="#fff"/><rect x="260.4" y="625.9" width="3.2" height="3.2" fill="#fff"/><rect x="265.4" y="625.9" width="3.2" height="3.2" fill="#fff"/><rect x="273.4" y="625.9" width="3.2" height="3.2" fill="#fff"/><rect x="458.9" y="615.9" width="3.2" height="3.2" fill="#fff"/><rect x="458.9" y="635.9" width="3.2" height="3.2" fill="#fff"/><rect x="435.4" y="615.9" width="3.2" height="3.2" fill="#fff"/><rect x="435.4" y="635.9" width="3.2" height="3.2" fill="#fff"/><rect x="422.4" y="615.9" width="3.2" height="3.2" fill="#fff"/><rect x="422.4" y="635.9" width="3.2" height="3.2" fill="#fff"/><rect x="415.4" y="615.9" width="3.2" height="3.2" fill="#fff"/><rect x="415.4" y="635.9" width="3.2" height="3.2" fill="#fff"/><rect x="408.4" y="615.9" width="3.2" height="3.2" fill="#fff"/><rect x="408.4" y="635.9" width="3.2" height="3.2" fill="#fff"/><rect x="376.4" y="615.9" width="3.2" height="3.2" fill="#fff"/><rect x="376.4" y="635.9" width="3.2" height="3.2" fill="#fff"/><rect x="369.4" y="615.9" width="3.2" height="3.2" fill="#fff"/><rect x="369.4" y="635.9" width="3.2" height="3.2" fill="#fff"/><rect x="343.4" y="615.9" width="3.2" height="3.2" fill="#fff"/><rect x="343.4" y="635.9" width="3.2" height="3.2" fill="#fff"/><rect x="336.9" y="615.9" width="3.2" height="3.2" fill="#fff"/><rect x="336.9" y="635.9" width="3.2" height="3.2" fill="#fff"/><rect x="454.4" y="625.9" width="3.2" height="3.2" fill="#fff"/><rect x="435.4" y="625.9" width="3.2" height="3.2" fill="#fff"/><rect x="420.4" y="625.9" width="3.2" height="3.2" fill="#fff"/><rect x="416.4" y="625.9" width="3.2" height="3.2" fill="#fff"/><rect x="406.4" y="625.9" width="3.2" height="3.2" fill="#fff"/><rect x="381.9" y="625.9" width="3.2" height="3.2" fill="#fff"/><rect x="377.9" y="625.9" width="3.2" height="3.2" fill="#fff"/><rect x="357.4" y="625.9" width="3.2" height="3.2" fill="#fff"/><rect x="352.4" y="625.9" width="3.2" height="3.2" fill="#fff"/><rect x="344.4" y="625.9" width="3.2" height="3.2" fill="#fff"/><rect x="217.5" y="614.5" width="14" height="7" fill="#f4f4f4"/><rect x="217.5" y="633.5" width="14" height="7" fill="#f4f4f4"/><rect x="217.0" y="626.0" width="15" height="3" fill="#f4f4f4"/><rect x="218.5" y="622.0" width="12" height="4" fill="#d0d0d0"/><rect x="218.5" y="629.0" width="12" height="4" fill="#d0d0d0"/><rect x="389.5" y="614.5" width="14" height="7" fill="#f4f4f4"/><rect x="389.5" y="633.5" width="14" height="7" fill="#f4f4f4"/><rect x="389.0" y="626.0" width="15" height="3" fill="#f4f4f4"/><rect x="390.5" y="622.0" width="12" height="4" fill="#d0d0d0"/><rect x="390.5" y="629.0" width="12" height="4" fill="#d0d0d0"/><polygon points="152.6 627.5 151.5 635.9 148.8 642.2 141 647.3 133.2 642.2 130.5 635.9 129.4 627.5 130.5 619.1 133.2 612.8 141 607.7 148.8 612.8 151.5 619.1" fill="#a3a3a3" stroke="#dcdcdc" stroke-width="1.7"/><path d="M129.4 627.5H152.6M148.8 642.2L133.2 612.8M133.2 642.2L148.8 612.8M148.8 642.2H133.2M133.2 612.8H148.8" stroke="#d8d8d8" stroke-width="1"/><rect x="150.9" y="625.9" width="3.3" height="3.3" fill="#fff"/><rect x="147.1" y="640.6" width="3.3" height="3.3" fill="#fff"/><rect x="139.3" y="645.6" width="3.3" height="3.3" fill="#fff"/><rect x="131.6" y="640.6" width="3.3" height="3.3" fill="#fff"/><rect x="127.8" y="625.9" width="3.3" height="3.3" fill="#fff"/><rect x="131.6" y="611.1" width="3.3" height="3.3" fill="#fff"/><rect x="139.3" y="606.1" width="3.3" height="3.3" fill="#fff"/><rect x="147.1" y="611.1" width="3.3" height="3.3" fill="#fff"/><polygon points="491.6 627.5 490.5 635.9 487.8 642.2 480 647.3 472.2 642.2 469.5 635.9 468.4 627.5 469.5 619.1 472.2 612.8 480 607.7 487.8 612.8 490.5 619.1" fill="#a3a3a3" stroke="#dcdcdc" stroke-width="1.7"/><path d="M468.4 627.5H491.6M487.8 642.2L472.2 612.8M472.2 642.2L487.8 612.8M487.8 642.2H472.2M472.2 612.8H487.8" stroke="#d8d8d8" stroke-width="1"/><rect x="490" y="625.9" width="3.3" height="3.3" fill="#fff"/><rect x="486.1" y="640.6" width="3.3" height="3.3" fill="#fff"/><rect x="478.4" y="645.6" width="3.3" height="3.3" fill="#fff"/><rect x="470.6" y="640.6" width="3.3" height="3.3" fill="#fff"/><rect x="466.8" y="625.9" width="3.3" height="3.3" fill="#fff"/><rect x="470.6" y="611.1" width="3.3" height="3.3" fill="#fff"/><rect x="478.4" y="606.1" width="3.3" height="3.3" fill="#fff"/><rect x="486.1" y="611.1" width="3.3" height="3.3" fill="#fff"/><polygon points="307.8 627.5 306.9 635.9 304.6 642.2 298 647.3 291.4 642.2 289.1 635.9 288.2 627.5 289.1 619.1 291.4 612.8 298 607.7 304.6 612.8 306.9 619.1" fill="#a3a3a3" stroke="#dcdcdc" stroke-width="1.7"/><path d="M288.2 627.5H307.8M304.6 642.2L291.4 612.8M291.4 642.2L304.6 612.8M304.6 642.2H291.4M291.4 612.8H304.6" stroke="#d8d8d8" stroke-width="1"/><rect x="306.2" y="625.9" width="3.3" height="3.3" fill="#fff"/><rect x="302.9" y="640.6" width="3.3" height="3.3" fill="#fff"/><rect x="296.4" y="645.6" width="3.3" height="3.3" fill="#fff"/><rect x="289.8" y="640.6" width="3.3" height="3.3" fill="#fff"/><rect x="286.6" y="625.9" width="3.3" height="3.3" fill="#fff"/><rect x="289.8" y="611.1" width="3.3" height="3.3" fill="#fff"/><rect x="296.4" y="606.1" width="3.3" height="3.3" fill="#fff"/><rect x="302.9" y="611.1" width="3.3" height="3.3" fill="#fff"/><polygon points="332.8 627.5 331.9 635.9 329.6 642.2 323 647.3 316.4 642.2 314.1 635.9 313.2 627.5 314.1 619.1 316.4 612.8 323 607.7 329.6 612.8 331.9 619.1" fill="#a3a3a3" stroke="#dcdcdc" stroke-width="1.7"/><path d="M313.2 627.5H332.8M329.6 642.2L316.4 612.8M316.4 642.2L329.6 612.8M329.6 642.2H316.4M316.4 612.8H329.6" stroke="#d8d8d8" stroke-width="1"/><rect x="331.2" y="625.9" width="3.3" height="3.3" fill="#fff"/><rect x="327.9" y="640.6" width="3.3" height="3.3" fill="#fff"/><rect x="321.4" y="645.6" width="3.3" height="3.3" fill="#fff"/><rect x="314.8" y="640.6" width="3.3" height="3.3" fill="#fff"/><rect x="311.6" y="625.9" width="3.3" height="3.3" fill="#fff"/><rect x="314.8" y="611.1" width="3.3" height="3.3" fill="#fff"/><rect x="321.4" y="606.1" width="3.3" height="3.3" fill="#fff"/><rect x="327.9" y="611.1" width="3.3" height="3.3" fill="#fff"/><rect x="127.7" y="625.8" width="3.4" height="3.4" fill="#fff"/><rect x="151.3" y="625.8" width="3.4" height="3.4" fill="#fff"/><rect x="286.3" y="625.8" width="3.4" height="3.4" fill="#fff"/><rect x="306.3" y="625.8" width="3.4" height="3.4" fill="#fff"/><rect x="311.3" y="625.8" width="3.4" height="3.4" fill="#fff"/><rect x="331.3" y="625.8" width="3.4" height="3.4" fill="#fff"/><rect x="466.7" y="625.8" width="3.4" height="3.4" fill="#fff"/><rect x="489.9" y="625.8" width="3.4" height="3.4" fill="#fff"/><rect x="304.5" y="621" width="3" height="3" fill="#fff"/><rect x="304.5" y="631" width="3" height="3" fill="#fff"/><rect x="307" y="621" width="3" height="3" fill="#fff"/><rect x="307" y="631" width="3" height="3" fill="#fff"/><rect x="311" y="621" width="3" height="3" fill="#fff"/><rect x="311" y="631" width="3" height="3" fill="#fff"/><rect x="313.5" y="621" width="3" height="3" fill="#fff"/><rect x="313.5" y="631" width="3" height="3" fill="#fff"/></svg></div>
<div class="abs vp" style="left:621px;top:446px;width:618px;height:363px;background:#3380b3"><svg width="614" height="359" viewBox="623 448 614 359" fill="none"><path d="M471.5 520.4L-12663.2 6789.5M519.3 515.5L-11042.5 6780.2M564.3 511L-9421.8 6770.9M606.7 506.6L-7801.1 6761.6M646.9 502.6L-6180.4 6752.2M684.9 498.7L-4559.7 6742.9M720.9 495.1L-2939 6733.6M755.1 491.6L-1318.3 6724.3M787.7 488.3L302.4 6715M818.7 485.1L1923.1 6705.7M848.2 482.1L3543.8 6696.3M876.3 479.3L5164.5 6687M903.2 476.5L6785.2 6677.7M928.9 473.9L8405.8 6668.4M953.6 471.4L10026.5 6659.1M977.1 469L11647.2 6649.7M999.7 466.7L13267.9 6640.4M1021.4 464.5L14888.6 6631.1M1042.3 462.4L16509.3 6621.8M1062.3 460.4L18130 6612.5M1081.6 458.4L19750.7 6603.2M471.5 520.4L1081.6 458.4M439.1 535.8L1098.4 464M399.6 554.7L1117.4 470.2M350.3 578.2L1139 477.3M287.1 608.4L1163.6 485.4M203 648.5L1192.1 494.8M85.8 704.5L1225.4 505.8M-89.1 788L1264.8 518.7M-378 925.9L1312.2 534.3M-946.4 1197.1L1370.3 553.5M-2579 1976.4L1443.1 577.4M-11709.7 6784L1537.3 608.4M-6938.6 6756.6L1663.5 650M-2167.5 6729.2L1841.7 708.6M2603.6 6701.7L2112.1 797.6M7374.7 6674.3L2571.5 948.8M12145.8 6646.9L3524.5 1262.5M16916.9 6619.4L6688.8 2304" stroke="#787878" stroke-width="1.35" opacity=".55"/><path d="M962 744.5L1238 649.5" stroke="#e6f03c" stroke-width="1.2"/><path d="M962 744.5L988.5 807" stroke="#9a4fd0" stroke-width="2"/><path d="M962 744.5L965.6 723 M1001 516.5L1012.8 447" stroke="#30e0f0" stroke-width="1.4"/><g stroke-linecap="butt"><path d="M936 607L973.2 661" stroke="#3c3a38" stroke-width="5.8" stroke-dasharray="2 1.5"/><path d="M936 607L973.2 661" stroke="#8d8987" stroke-width="4.6"/><path d="M936.5 606.7L973.7 660.7" stroke="#aeaaa7" stroke-width="2.1" opacity=".85"/><path d="M982 598L936 673" stroke="#3c3a38" stroke-width="5.8" stroke-dasharray="2 1.5"/><path d="M982 598L936 673" stroke="#8d8987" stroke-width="4.6"/><path d="M981.5 597.7L935.5 672.7" stroke="#aeaaa7" stroke-width="2.1" opacity=".85"/><path d="M936.3 698.7L963.6 726" stroke="#3c3a38" stroke-width="4.8" stroke-dasharray="2 1.5"/><path d="M936.3 698.7L963.6 726" stroke="#8d8987" stroke-width="3.6"/><path d="M936.6 698.4L963.9 725.7" stroke="#aeaaa7" stroke-width="1.6" opacity=".85"/><path d="M966.8 689L934.7 732.4" stroke="#3c3a38" stroke-width="4.8" stroke-dasharray="2 1.5"/><path d="M966.8 689L934.7 732.4" stroke="#8d8987" stroke-width="3.6"/><path d="M966.5 688.7L934.4 732.1" stroke="#aeaaa7" stroke-width="1.6" opacity=".85"/><path d="M866 621L921.9 677" stroke="#3c3a38" stroke-width="6.2" stroke-dasharray="2 1.5"/><path d="M866 621L921.9 677" stroke="#8d8987" stroke-width="5"/><path d="M866.4 620.6L922.3 676.6" stroke="#aeaaa7" stroke-width="2.2" opacity=".85"/><path d="M916.3 615.6L879.3 688" stroke="#3c3a38" stroke-width="6.2" stroke-dasharray="2 1.5"/><path d="M916.3 615.6L879.3 688" stroke="#8d8987" stroke-width="5"/><path d="M915.8 615.3L878.8 687.7" stroke="#aeaaa7" stroke-width="2.2" opacity=".85"/><path d="M885.7 713L923.5 735.6" stroke="#3c3a38" stroke-width="5.2" stroke-dasharray="2 1.5"/><path d="M885.7 713L923.5 735.6" stroke="#8d8987" stroke-width="4"/><path d="M885.9 712.6L923.7 735.2" stroke="#aeaaa7" stroke-width="1.8" opacity=".85"/><path d="M921 704.3L891.4 746.8" stroke="#3c3a38" stroke-width="5.2" stroke-dasharray="2 1.5"/><path d="M921 704.3L891.4 746.8" stroke="#8d8987" stroke-width="4"/><path d="M920.6 704L891 746.5" stroke="#aeaaa7" stroke-width="1.8" opacity=".85"/><path d="M935.6 601L960.8 596.9" stroke="#3c3a38" stroke-width="10" stroke-dasharray="2 1.5"/><path d="M935.6 601L960.8 596.9" stroke="#bab6b3" stroke-width="8.8"/><path d="M935.4 600L960.6 595.8" stroke="#d2cecb" stroke-width="4" opacity=".85"/><path d="M960.8 596.9L986 592.7" stroke="#3c3a38" stroke-width="10" stroke-dasharray="2 1.5"/><path d="M960.8 596.9L986 592.7" stroke="#9c9896" stroke-width="8.8"/><path d="M960.6 595.8L985.8 591.7" stroke="#b6b2af" stroke-width="4" opacity=".85"/><path d="M934.7 640.9L954.2 636.5" stroke="#3c3a38" stroke-width="8.4" stroke-dasharray="2 1.5"/><path d="M934.7 640.9L954.2 636.5" stroke="#bab6b3" stroke-width="7.2"/><path d="M934.5 640.1L954 635.7" stroke="#d2cecb" stroke-width="3.2" opacity=".85"/><path d="M954.2 636.5L978 631.2" stroke="#3c3a38" stroke-width="8.4" stroke-dasharray="2 1.5"/><path d="M954.2 636.5L978 631.2" stroke="#9c9896" stroke-width="7.2"/><path d="M954 635.7L977.8 630.4" stroke="#b6b2af" stroke-width="3.2" opacity=".85"/><path d="M934.7 671.4L951.9 667.3" stroke="#3c3a38" stroke-width="8.4" stroke-dasharray="2 1.5"/><path d="M934.7 671.4L951.9 667.3" stroke="#bab6b3" stroke-width="7.2"/><path d="M934.5 670.6L951.7 666.5" stroke="#d2cecb" stroke-width="3.2" opacity=".85"/><path d="M951.9 667.3L973 662.3" stroke="#3c3a38" stroke-width="8.4" stroke-dasharray="2 1.5"/><path d="M951.9 667.3L973 662.3" stroke="#9c9896" stroke-width="7.2"/><path d="M951.7 666.5L972.8 661.5" stroke="#b6b2af" stroke-width="3.2" opacity=".85"/><path d="M934.7 694.6L950.6 690.6" stroke="#3c3a38" stroke-width="8" stroke-dasharray="2 1.5"/><path d="M934.7 694.6L950.6 690.6" stroke="#bab6b3" stroke-width="6.8"/><path d="M934.5 693.8L950.4 689.8" stroke="#d2cecb" stroke-width="3.1" opacity=".85"/><path d="M950.6 690.6L970 685.6" stroke="#3c3a38" stroke-width="8" stroke-dasharray="2 1.5"/><path d="M950.6 690.6L970 685.6" stroke="#9c9896" stroke-width="6.8"/><path d="M950.4 689.8L969.8 684.8" stroke="#b6b2af" stroke-width="3.1" opacity=".85"/><path d="M934.7 716.3L949.2 712.2" stroke="#3c3a38" stroke-width="6.4" stroke-dasharray="2 1.5"/><path d="M934.7 716.3L949.2 712.2" stroke="#bab6b3" stroke-width="5.2"/><path d="M934.5 715.7L949.1 711.6" stroke="#d2cecb" stroke-width="2.3" opacity=".85"/><path d="M949.2 712.2L967 707.2" stroke="#3c3a38" stroke-width="6.4" stroke-dasharray="2 1.5"/><path d="M949.2 712.2L967 707.2" stroke="#9c9896" stroke-width="5.2"/><path d="M949.1 711.6L966.8 706.6" stroke="#b6b2af" stroke-width="2.3" opacity=".85"/><path d="M934.7 734L947.9 730.2" stroke="#3c3a38" stroke-width="7" stroke-dasharray="2 1.5"/><path d="M934.7 734L947.9 730.2" stroke="#bab6b3" stroke-width="5.8"/><path d="M934.5 733.3L947.7 729.6" stroke="#d2cecb" stroke-width="2.6" opacity=".85"/><path d="M947.9 730.2L964 725.6" stroke="#3c3a38" stroke-width="7" stroke-dasharray="2 1.5"/><path d="M947.9 730.2L964 725.6" stroke="#9c9896" stroke-width="5.8"/><path d="M947.7 729.6L963.8 724.9" stroke="#b6b2af" stroke-width="2.6" opacity=".85"/><path d="M864 616.8L892.1 611.8" stroke="#3c3a38" stroke-width="10" stroke-dasharray="2 1.5"/><path d="M864 616.8L892.1 611.8" stroke="#bab6b3" stroke-width="8.8"/><path d="M863.8 615.8L892 610.8" stroke="#d2cecb" stroke-width="4" opacity=".85"/><path d="M892.1 611.8L920.3 606.8" stroke="#3c3a38" stroke-width="10" stroke-dasharray="2 1.5"/><path d="M892.1 611.8L920.3 606.8" stroke="#9c9896" stroke-width="8.8"/><path d="M892 610.8L920.1 605.8" stroke="#b6b2af" stroke-width="4" opacity=".85"/><path d="M871 656.2L893.9 651.5" stroke="#3c3a38" stroke-width="9" stroke-dasharray="2 1.5"/><path d="M871 656.2L893.9 651.5" stroke="#bab6b3" stroke-width="7.8"/><path d="M870.8 655.3L893.7 650.6" stroke="#d2cecb" stroke-width="3.5" opacity=".85"/><path d="M893.9 651.5L921.9 645.7" stroke="#3c3a38" stroke-width="9" stroke-dasharray="2 1.5"/><path d="M893.9 651.5L921.9 645.7" stroke="#9c9896" stroke-width="7.8"/><path d="M893.7 650.6L921.7 644.8" stroke="#b6b2af" stroke-width="3.5" opacity=".85"/><path d="M878.6 686.9L898.1 682.4" stroke="#3c3a38" stroke-width="8.8" stroke-dasharray="2 1.5"/><path d="M878.6 686.9L898.1 682.4" stroke="#bab6b3" stroke-width="7.6"/><path d="M878.4 686L897.9 681.6" stroke="#d2cecb" stroke-width="3.4" opacity=".85"/><path d="M898.1 682.4L921.9 677" stroke="#3c3a38" stroke-width="8.8" stroke-dasharray="2 1.5"/><path d="M898.1 682.4L921.9 677" stroke="#9c9896" stroke-width="7.6"/><path d="M897.9 681.6L921.7 676.1" stroke="#b6b2af" stroke-width="3.4" opacity=".85"/><path d="M883 710.1L900.9 705.7" stroke="#3c3a38" stroke-width="8.2" stroke-dasharray="2 1.5"/><path d="M883 710.1L900.9 705.7" stroke="#bab6b3" stroke-width="7"/><path d="M882.8 709.3L900.7 704.9" stroke="#d2cecb" stroke-width="3.1" opacity=".85"/><path d="M900.9 705.7L922.7 700.3" stroke="#3c3a38" stroke-width="8.2" stroke-dasharray="2 1.5"/><path d="M900.9 705.7L922.7 700.3" stroke="#9c9896" stroke-width="7"/><path d="M900.7 704.9L922.5 699.5" stroke="#b6b2af" stroke-width="3.1" opacity=".85"/><path d="M887.5 730.2L903.7 725.7" stroke="#3c3a38" stroke-width="6.6" stroke-dasharray="2 1.5"/><path d="M887.5 730.2L903.7 725.7" stroke="#bab6b3" stroke-width="5.4"/><path d="M887.3 729.6L903.5 725.1" stroke="#d2cecb" stroke-width="2.4" opacity=".85"/><path d="M903.7 725.7L923.5 720.3" stroke="#3c3a38" stroke-width="6.6" stroke-dasharray="2 1.5"/><path d="M903.7 725.7L923.5 720.3" stroke="#9c9896" stroke-width="5.4"/><path d="M903.5 725.1L923.3 719.7" stroke="#b6b2af" stroke-width="2.4" opacity=".85"/><path d="M891.5 748L905.9 743.9" stroke="#3c3a38" stroke-width="7.2" stroke-dasharray="2 1.5"/><path d="M891.5 748L905.9 743.9" stroke="#bab6b3" stroke-width="6"/><path d="M891.3 747.3L905.7 743.2" stroke="#d2cecb" stroke-width="2.7" opacity=".85"/><path d="M905.9 743.9L923.5 738.8" stroke="#3c3a38" stroke-width="7.2" stroke-dasharray="2 1.5"/><path d="M905.9 743.9L923.5 738.8" stroke="#9c9896" stroke-width="6"/><path d="M905.7 743.2L923.3 738.1" stroke="#b6b2af" stroke-width="2.7" opacity=".85"/><polygon points="895.4 637.7 906.6 654.5 898.6 664.1 889.8 650.5" fill="#9b9795" stroke="#807c7a" stroke-width=".6"/><polygon points="958 630.4 966 637.7 958 648.9 950.8 639.3" fill="#9b9795" stroke="#807c7a" stroke-width=".6"/><polygon points="905 722.7 912.2 728.3 906.6 734.8 900.2 729.1" fill="#9b9795" stroke="#807c7a" stroke-width=".6"/><polygon points="950.8 709.1 955.6 713.9 950.8 720.3 945.9 714.7" fill="#9b9795" stroke="#807c7a" stroke-width=".6"/><path d="M851 557 C866 555.5 878 555.5 889 557.5" stroke="#3c3a38" stroke-width="11.7" stroke-dasharray="2 1.5"/><path d="M851 557 C866 555.5 878 555.5 889 557.5" stroke="#bab6b3" stroke-width="10.5"/><path d="M851 557 C866 555.5 878 555.5 889 557.5" stroke="#d2cecb" stroke-width="4.7" opacity=".85" transform="translate(0,-0.8)"/><path d="M889 557.5 C902 560 912 564 921 571" stroke="#3c3a38" stroke-width="11.7" stroke-dasharray="2 1.5"/><path d="M889 557.5 C902 560 912 564 921 571" stroke="#9c9896" stroke-width="10.5"/><path d="M889 557.5 C902 560 912 564 921 571" stroke="#b6b2af" stroke-width="4.7" opacity=".85" transform="translate(0,-0.8)"/><path d="M994 535 C982 535.5 972 538 962 543" stroke="#3c3a38" stroke-width="11" stroke-dasharray="2 1.5"/><path d="M994 535 C982 535.5 972 538 962 543" stroke="#bab6b3" stroke-width="9.8"/><path d="M994 535 C982 535.5 972 538 962 543" stroke="#d2cecb" stroke-width="4.4" opacity=".85" transform="translate(0,-0.8)"/><path d="M962 543 C952 548 943 556 936 566" stroke="#3c3a38" stroke-width="11" stroke-dasharray="2 1.5"/><path d="M962 543 C952 548 943 556 936 566" stroke="#aaa6a3" stroke-width="9.8"/><path d="M962 543 C952 548 943 556 936 566" stroke="#c4c0bc" stroke-width="4.4" opacity=".85" transform="translate(0,-0.8)"/><polygon points="848.3 539.7 836.7 542.3 887.5 754.2 893.7 752.8" fill="#3c3a38" opacity=".75"/><polygon points="847.7 539.8 837.3 542.2 888.1 754.1 893.1 752.9" fill="#858180"/><polygon points="843 540.9 838.8 541.8 888.8 753.9 890.9 753.4" fill="#a29e9b" opacity=".8"/><polygon points="847.7 539.8 845.6 540.3 892.1 753.2 893.1 752.9" fill="#6f6b69" opacity=".7"/><polygon points="1003.6 518.9 991.6 517.1 962.1 728 968.7 729" fill="#3c3a38" opacity=".75"/><polygon points="1003 518.8 992.2 517.2 962.7 728.1 968.1 728.9" fill="#858180"/><polygon points="998.1 518.1 993.7 517.4 963.5 728.2 965.7 728.5" fill="#a29e9b" opacity=".8"/><polygon points="1003 518.8 1000.9 518.5 967 728.7 968.1 728.9" fill="#6f6b69" opacity=".7"/><polygon points="926.4 555.9 915.8 556.1 922.6 741.6 929.4 741.4" fill="#3c3a38" opacity=".75"/><polygon points="925.8 555.9 916.4 556.1 923.2 741.6 928.8 741.4" fill="#858180"/><polygon points="921.6 556 917.7 556.1 924 741.6 926.3 741.5" fill="#a29e9b" opacity=".8"/><polygon points="925.8 555.9 923.9 555.9 927.7 741.5 928.8 741.4" fill="#6f6b69" opacity=".7"/><polygon points="936.6 554 925.4 554 928.2 742.5 935.4 742.5" fill="#3c3a38" opacity=".75"/><polygon points="936 554 926 554 928.8 742.5 934.8 742.5" fill="#858180"/><polygon points="931.5 554 927.4 554 929.6 742.5 932.1 742.5" fill="#a29e9b" opacity=".8"/><polygon points="936 554 934 554 933.6 742.5 934.8 742.5" fill="#6f6b69" opacity=".7"/><ellipse cx="842.5" cy="540" rx="5.3" ry="2.6" fill="#979391"/><ellipse cx="997.6" cy="517" rx="5.5" ry="2.6" fill="#979391"/><ellipse cx="921.1" cy="555" rx="4.8" ry="2.4" fill="#979391"/><ellipse cx="931" cy="553" rx="5" ry="2.4" fill="#979391"/></g></svg></div>
<div class="abs" style="left:1240px;top:58px;width:211px;height:751px;border:1px solid;border-color:#fff #404040 #404040 #fff;box-shadow:inset -1px -1px 0 #808080"></div>
<div class="abs tab" style="left:1240px;top:38px;width:46px;height:22px;line-height:19px;border-bottom:none;z-index:2">Model</div>
<div class="abs tab" style="left:1286px;top:41px;width:44px;height:17px;line-height:16px">Groups</div>
<div class="abs tab" style="left:1330px;top:41px;width:54px;height:17px;line-height:16px">Materials</div>
<div class="abs tab" style="left:1384px;top:41px;width:42px;height:17px;line-height:16px">Joints</div>
<div class="abs" style="left:1244px;top:69px;width:184px;height:242px;border:1px solid #808080;box-shadow:1px 1px 0 #fff, inset 1px 1px 0 #fff"></div>
<div class="abs lbl" style="left:1251px;top:64px;background:#d4d0c8;padding:0 3px">Tools</div>
<div class="abs btn" style="left:1254px;top:82px;width:80px">Select</div>
<div class="abs btn" style="left:1339px;top:82px;width:80px">Move</div>
<div class="abs btn" style="left:1254px;top:102px;width:80px">Rotate</div>
<div class="abs btn" style="left:1339px;top:102px;width:80px">Scale</div>
<div class="abs btn" style="left:1254px;top:127px;width:80px">Vertex</div>
<div class="abs btn" style="left:1339px;top:127px;width:80px">Face</div>
<div class="abs btn" style="left:1254px;top:147px;width:80px">Sphere</div>
<div class="abs btn" style="left:1339px;top:147px;width:80px">GeoSphere</div>
<div class="abs btn" style="left:1254px;top:167px;width:80px">Box</div>
<div class="abs btn" style="left:1339px;top:167px;width:80px">Cylinder</div>
<div class="abs btn" style="left:1254px;top:187px;width:80px">Plane</div>
<div class="abs btn" style="left:1254px;top:212px;width:80px">Extrude</div>
<div class="abs btn" style="left:1339px;top:212px;width:80px">Joint</div>
<div class="abs btn" style="left:1254px;top:242px;width:80px">Comment</div>
<div class="abs chk" style="left:1254px;top:266px"><svg class="abs" style="left:1px;top:1px" width="9" height="9" viewBox="0 0 9 9"><path d="M1 3l2 2l4-4v3l-4 4l-2-2z" fill="#000"/></svg></div>
<div class="abs lbl" style="left:1272px;top:267px">Redraw All Viewports</div>
<div class="abs chk" style="left:1254px;top:286px"></div><div class="abs lbl" style="left:1272px;top:287px">Auto Tool</div>
<div class="abs chk" style="left:1334px;top:286px"></div><div class="abs lbl" style="left:1352px;top:287px">Snap To Gric</div>
<div class="abs" style="left:0;top:810px;width:1239px;height:41px;border:1px solid;border-color:#808080 #fff #fff #808080"></div>
<div class="abs" style="left:20px;top:820px;width:1211px;height:4px;background:linear-gradient(#808080 0 25%,#404040 25% 50%,#f0f0f0 50% 75%,#fff 75%)"></div>
<svg class="abs" style="left:8px;top:812px" width="14" height="22" viewBox="0 0 14 22"><path d="M1.5 1.5h10v14l-5 5l-5-5z" fill="#f4f2ee" stroke="#fff"/><path d="M11.5 1v14.5l-5 5" fill="none" stroke="#404040"/><path d="M10.5 2v13l-4 4" fill="none" stroke="#808080"/></svg>
<div class="abs" style="left:14px;top:835px;width:1px;height:3px;background:#000"></div><div class="abs" style="left:56px;top:835px;width:1px;height:3px;background:#000"></div><div class="abs" style="left:97px;top:835px;width:1px;height:3px;background:#000"></div><div class="abs" style="left:139px;top:835px;width:1px;height:3px;background:#000"></div><div class="abs" style="left:181px;top:835px;width:1px;height:3px;background:#000"></div><div class="abs" style="left:223px;top:835px;width:1px;height:3px;background:#000"></div><div class="abs" style="left:264px;top:835px;width:1px;height:3px;background:#000"></div><div class="abs" style="left:306px;top:835px;width:1px;height:3px;background:#000"></div><div class="abs" style="left:348px;top:835px;width:1px;height:3px;background:#000"></div><div class="abs" style="left:390px;top:835px;width:1px;height:3px;background:#000"></div><div class="abs" style="left:431px;top:835px;width:1px;height:3px;background:#000"></div><div class="abs" style="left:473px;top:835px;width:1px;height:3px;background:#000"></div><div class="abs" style="left:515px;top:835px;width:1px;height:3px;background:#000"></div><div class="abs" style="left:557px;top:835px;width:1px;height:3px;background:#000"></div><div class="abs" style="left:598px;top:835px;width:1px;height:3px;background:#000"></div><div class="abs" style="left:640px;top:835px;width:1px;height:3px;background:#000"></div><div class="abs" style="left:682px;top:835px;width:1px;height:3px;background:#000"></div><div class="abs" style="left:724px;top:835px;width:1px;height:3px;background:#000"></div><div class="abs" style="left:765px;top:835px;width:1px;height:3px;background:#000"></div><div class="abs" style="left:807px;top:835px;width:1px;height:3px;background:#000"></div><div class="abs" style="left:849px;top:835px;width:1px;height:3px;background:#000"></div><div class="abs" style="left:891px;top:835px;width:1px;height:3px;background:#000"></div><div class="abs" style="left:932px;top:835px;width:1px;height:3px;background:#000"></div><div class="abs" style="left:974px;top:835px;width:1px;height:3px;background:#000"></div><div class="abs" style="left:1016px;top:835px;width:1px;height:3px;background:#000"></div><div class="abs" style="left:1058px;top:835px;width:1px;height:3px;background:#000"></div><div class="abs" style="left:1099px;top:835px;width:1px;height:3px;background:#000"></div><div class="abs" style="left:1141px;top:835px;width:1px;height:3px;background:#000"></div><div class="abs" style="left:1183px;top:835px;width:1px;height:3px;background:#000"></div><div class="abs" style="left:1224px;top:835px;width:1px;height:3px;background:#000"></div>
<div class="abs abtn" style="left:1239px;top:811px"><svg class="abs" style="left:0;top:0" width="16" height="16" viewBox="0 0 16 16"><path d="M4.5 4v9M6.5 4v9M11.5 5l-4 3.5l4 3.5" transform="translate(1,1)" stroke="#fff" fill="none" stroke-width=".9"/><path d="M4.5 4v9M6.5 4v9M11.5 5l-4 3.5l4 3.5" stroke="#808080" fill="none" stroke-width=".9"/></svg></div>
<div class="abs abtn" style="left:1259px;top:811px"><svg class="abs" style="left:0;top:0" width="16" height="16" viewBox="0 0 16 16"><path d="M6.5 4v9M11.5 5l-4 3.5l4 3.5" transform="translate(1,1)" stroke="#fff" fill="none" stroke-width=".9"/><path d="M6.5 4v9M11.5 5l-4 3.5l4 3.5" stroke="#808080" fill="none" stroke-width=".9"/></svg></div>
<div class="abs abtn" style="left:1279px;top:811px"><svg class="abs" style="left:0;top:0" width="16" height="16" viewBox="0 0 16 16"><path d="M7.5 5l-4 3.5l4 3.5M12.5 5l-4 3.5l4 3.5" transform="translate(1,1)" stroke="#fff" fill="none" stroke-width=".9"/><path d="M7.5 5l-4 3.5l4 3.5M12.5 5l-4 3.5l4 3.5" stroke="#808080" fill="none" stroke-width=".9"/></svg></div>
<div class="abs abtn" style="left:1299px;top:811px"><svg class="abs" style="left:0;top:0" width="16" height="16" viewBox="0 0 16 16"><path d="M9.5 5l-4 3.5l4 3.5" transform="translate(1,1)" stroke="#fff" fill="none" stroke-width=".9"/><path d="M9.5 5l-4 3.5l4 3.5" stroke="#808080" fill="none" stroke-width=".9"/></svg></div>
<div class="abs abtn" style="left:1319px;top:811px"><svg class="abs" style="left:0;top:0" width="16" height="16" viewBox="0 0 16 16"><path d="M6.5 5l4 3.5l-4 3.5" transform="translate(1,1)" stroke="#fff" fill="none" stroke-width=".9"/><path d="M6.5 5l4 3.5l-4 3.5" stroke="#808080" fill="none" stroke-width=".9"/></svg></div>
<div class="abs abtn" style="left:1339px;top:811px"><svg class="abs" style="left:0;top:0" width="16" height="16" viewBox="0 0 16 16"><path d="M3.5 5l4 3.5l-4 3.5M8.5 5l4 3.5l-4 3.5" transform="translate(1,1)" stroke="#fff" fill="none" stroke-width=".9"/><path d="M3.5 5l4 3.5l-4 3.5M8.5 5l4 3.5l-4 3.5" stroke="#808080" fill="none" stroke-width=".9"/></svg></div>
<div class="abs abtn" style="left:1359px;top:811px"><svg class="abs" style="left:0;top:0" width="16" height="16" viewBox="0 0 16 16"><path d="M4.5 5l4 3.5l-4 3.5M10.5 4v9" transform="translate(1,1)" stroke="#fff" fill="none" stroke-width=".9"/><path d="M4.5 5l4 3.5l-4 3.5M10.5 4v9" stroke="#808080" fill="none" stroke-width=".9"/></svg></div>
<div class="abs abtn" style="left:1379px;top:811px"><svg class="abs" style="left:0;top:0" width="16" height="16" viewBox="0 0 16 16"><path d="M4.5 5l4 3.5l-4 3.5M10.5 4v9M12.5 4v9" transform="translate(1,1)" stroke="#fff" fill="none" stroke-width=".9"/><path d="M4.5 5l4 3.5l-4 3.5M10.5 4v9M12.5 4v9" stroke="#808080" fill="none" stroke-width=".9"/></svg></div>
<div class="abs btn" style="left:1399px;top:811px;width:38px;height:38px;line-height:34px">Anim</div>
<div class="abs dedit dis" style="left:1239px;top:832px">0</div>
<div class="abs dedit dis" style="left:1279px;top:832px"></div>
<div class="abs dedit dis" style="left:1319px;top:832px">30</div>
<div class="abs dedit dis" style="left:1359px;top:832px">30</div>
<div class="abs" style="left:0;top:851px;width:1340px;height:1px;background:#fff"></div>
<div class="abs lbl" style="left:1px;top:853px;letter-spacing:-.2px">x -1.229 y 1.527 z 0.000</div>
<div class="abs" style="left:1340px;top:852px;width:99px;height:20px;border:1px solid;border-color:#808080 #fff #fff #808080"></div>
<div class="abs" style="left:1247px;top:858px;width:86px;height:3px;border:1px solid;border-color:#808080 #fff #fff #808080;border-width:2px 0 1px 0"></div>
<svg class="abs" style="left:1287px;top:854px" width="8" height="15" viewBox="0 0 8 15"><path d="M.5 .5h6v10l-3 3l-3-3z" fill="#d4d0c8" stroke="#fff"/><path d="M6.5 0v10.5l-3 3" fill="none" stroke="#404040"/></svg>
<div class="abs" style="left:1249px;top:869px;width:1px;height:3px;background:#000"></div><div class="abs" style="left:1330px;top:869px;width:1px;height:3px;background:#000"></div>
</body></html>
